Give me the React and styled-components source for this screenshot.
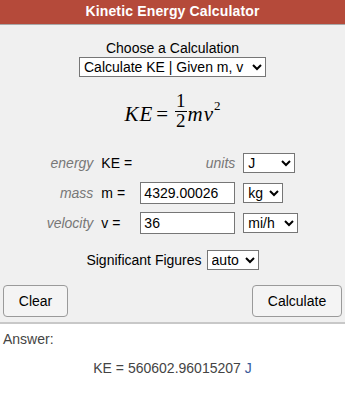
import { createGlobalStyle } from "styled-components";
import styled from "styled-components";

const GlobalStyle = createGlobalStyle`
  html, body {
    margin: 0;
    padding: 0;
    background: #fff;
    font-family: "Liberation Sans", Arial, sans-serif;
    font-size: 14px;
    color: #000;
  }
`;

export default function App() {
  return (
    <>
      <GlobalStyle />
      <Calculator>
        <Header>Kinetic Energy Calculator</Header>
        <Form>
          <ChooseBlock>
            <div>Choose a Calculation</div>
            <Select $width={187} defaultValue="ke">
              <option value="ke">Calculate KE | Given m, v</option>
            </Select>
          </ChooseBlock>
          <Formula>
            <Var>KE</Var>
            <Eq>=</Eq>
            <Fraction>
              <span>1</span>
              <span>2</span>
            </Fraction>
            <Var>mv</Var>
            <Sup>2</Sup>
          </Formula>
          <Table>
            <tbody>
              <tr>
                <Label>energy</Label>
                <Sym>KE =</Sym>
                <UnitsLabel>units</UnitsLabel>
                <td>
                  <Select $width={52} defaultValue="J">
                    <option>J</option>
                  </Select>
                </td>
              </tr>
              <tr>
                <Label>mass</Label>
                <Sym>m =</Sym>
                <td>
                  <Input defaultValue="4329.00026" />
                </td>
                <td>
                  <Select $width={40} defaultValue="kg">
                    <option>kg</option>
                  </Select>
                </td>
              </tr>
              <tr>
                <Label>velocity</Label>
                <Sym>v =</Sym>
                <td>
                  <Input defaultValue="36" />
                </td>
                <td>
                  <Select $width={55} defaultValue="mi/h">
                    <option>mi/h</option>
                  </Select>
                </td>
              </tr>
            </tbody>
          </Table>
          <SigRow>
            Significant Figures
            <Select $width={52} defaultValue="auto">
              <option>auto</option>
            </Select>
          </SigRow>
          <ButtonRow>
            <Button $width={65}>Clear</Button>
            <Button $width={90}>Calculate</Button>
          </ButtonRow>
        </Form>
        <Answer>
          <div>Answer:</div>
          <Result>
            KE = 560602.96015207 <Unit>J</Unit>
          </Result>
        </Answer>
      </Calculator>
    </>
  );
}

const Calculator = styled.div`
  width: 345px;
  height: 402px;
  display: flex;
  flex-direction: column;
  background: #fff;
`;

const Header = styled.div`
  height: 24px;
  line-height: 23px;
  background: #b54a3a;
  color: #fff;
  font-weight: bold;
  font-size: 14px;
  letter-spacing: 0.15px;
  text-align: center;
  border-bottom: 1px solid #a8a8a8;
`;

const Form = styled.div`
  background: #f0f0f0;
  padding: 15px 3px 5px;
  display: flex;
  flex-direction: column;
  align-items: center;
  border-bottom: 2px solid #c8c8c8;
`;

const ChooseBlock = styled.div`
  display: flex;
  flex-direction: column;
  align-items: center;
  line-height: 17px;
`;

const Select = styled.select`
  width: ${(p) => p.$width}px;
  height: 20px;
  font-family: "Liberation Sans", Arial, sans-serif;
  font-size: 14px;
  color: #000;
  background: #fff;
  border: 1px solid #767676;
  border-radius: 0;
  padding: 0;
`;

const Formula = styled.div`
  display: flex;
  align-items: center;
  margin: 14px 0 17px;
  font-family: "Liberation Serif", "Times New Roman", serif;
  font-size: 21px;
  height: 40px;
`;

const Var = styled.span`
  font-style: italic;
  letter-spacing: 1px;
  margin-top: 6px;
`;

const Eq = styled.span`
  margin: 6px 6px 0 3px;
`;

const Fraction = styled.span`
  display: inline-flex;
  flex-direction: column;
  align-items: center;
  font-size: 19px;
  line-height: 18px;
  padding: 0 1px;
  span:first-child {
    border-bottom: 1px solid #000;
    padding: 0 1px 1px;
  }
`;

const Sup = styled.span`
  font-size: 13px;
  align-self: flex-start;
  margin: 7px 0 0 0;
`;

const Table = styled.table`
  border-collapse: collapse;
  tr {
    height: 30px;
  }
  td {
    padding: 0;
  }
`;

const Label = styled.td`
  color: #777;
  font-style: italic;
  text-align: right;
  padding-right: 8px !important;
`;

const Sym = styled.td`
  width: 39px;
`;

const UnitsLabel = styled.td`
  color: #777;
  font-style: italic;
  text-align: right;
  padding-right: 8px !important;
`;

const Input = styled.input`
  width: 95px;
  height: 22px;
  box-sizing: border-box;
  font-family: "Liberation Sans", Arial, sans-serif;
  font-size: 14px;
  border: 1px solid #767676;
  padding: 0 3px;
  margin-right: 8px;
  background: #fff;
`;

const SigRow = styled.div`
  display: flex;
  align-items: center;
  gap: 5px;
  margin-top: 12px;
`;

const ButtonRow = styled.div`
  align-self: stretch;
  display: flex;
  justify-content: space-between;
  margin-top: 15px;
`;

const Button = styled.button`
  width: ${(p) => p.$width}px;
  height: 32px;
  font-family: "Liberation Sans", Arial, sans-serif;
  font-size: 14px;
  color: #000;
  background: #f4f4f4;
  border: 1px solid #9a9a9a;
  border-radius: 4px;
`;

const Answer = styled.div`
  flex: 1;
  padding: 7px 3px;
  color: #444;
  background: #fff;
`;

const Result = styled.div`
  text-align: center;
  margin-top: 13px;
  color: #444;
`;

const Unit = styled.span`
  color: #3a5a99;
`;
